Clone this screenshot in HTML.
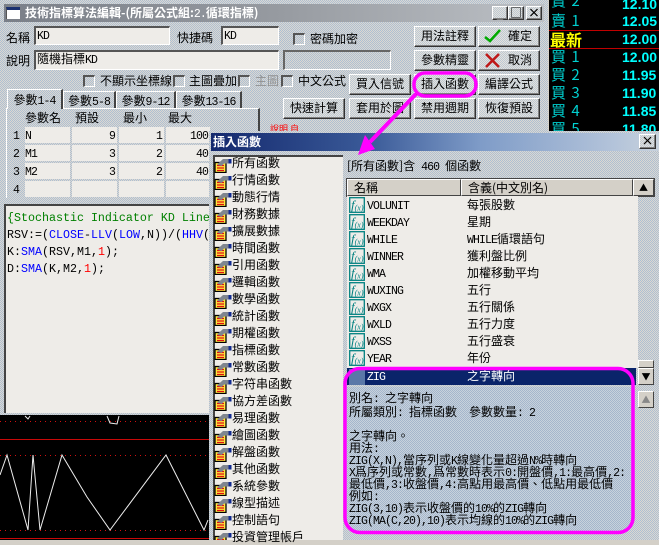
<!DOCTYPE html>
<html><head><meta charset="utf-8">
<style>
html,body{margin:0;padding:0}
body{width:659px;height:540px;overflow:hidden;position:relative;background:#d4d0c8;font:12px/14px "WenQuanYi Zen Hei","Noto Sans CJK TC",sans-serif;color:#000}
div{position:absolute;white-space:nowrap}
i{font:normal 11.5px "Liberation Mono",monospace;letter-spacing:-.9px}
.d{background:repeating-conic-gradient(#dbd8d2 0 25%,#aebfd2 0 50%) 0 0/2px 2px}
.btn{background:repeating-conic-gradient(#e4e2dc 0 25%,#bcc8d4 0 50%) 0 0/2px 2px;border:1px solid;border-color:#fff #333 #333 #fff;box-shadow:inset -1px -1px 0 #808080;text-align:center;line-height:18px;box-sizing:border-box;height:21px}
.in{background:#eeece8;border-top:2px solid #555;border-left:2px solid #555;border-right:1px solid #fff;border-bottom:1px solid #fff;box-sizing:border-box;padding-left:1px;line-height:13px}
.cb{width:12px;height:12px;box-sizing:border-box;border-top:2px solid #555;border-left:2px solid #555;border-right:1px solid #fff;border-bottom:1px solid #fff}
.tab{top:91px;height:17px;border-top:1px solid #fff;border-left:1px solid #fff;border-right:2px solid #444;text-align:center;line-height:17px;box-sizing:border-box}
.cell{background:#eeece8;height:16px;text-align:right;padding-right:2px;box-sizing:border-box;line-height:16px}
.r{left:551px;color:#00d0d0;font-size:15px;line-height:18px;word-spacing:2px}
.v{left:622px;color:#00ffff;font:bold 14px/18px "Liberation Sans",sans-serif}
.code{left:7px;font:11.67px/17px "Liberation Mono",monospace;color:#000}
.hb{background:#d4d0c8;border:1px solid;border-color:#fff #444 #444 #fff;box-sizing:border-box;height:17px;top:179px;line-height:15px;padding-left:6px}
.sb{width:16px;height:17px;background:#d4d0c8;border:1px solid;border-color:#fff #444 #444 #fff;box-sizing:border-box}
.t{left:232px}
.n{left:367px}
.m{left:467px}
.txt{left:349px;line-height:12px}
</style></head>
<body>
<svg width="0" height="0" style="position:absolute">
<symbol id="bk" viewBox="0 0 18 15"><rect x="1" y="4.500" width="11" height="10" fill="#ffe840" stroke="#000" stroke-width="1.300"/><path d="M3 7.500h7M3 10h7M3 12.500h7" stroke="#e01010" stroke-width="1.200"/><path d="M3 6.500 9 1h6v4.500h-5l-2.500 2.500z" fill="#7f868f"/><rect x="14.500" y="1" width="3" height="4.500" fill="#102a90"/></symbol>
<symbol id="fx" viewBox="0 0 16 16"><rect x=".7" y=".7" width="14.600" height="14.600" fill="#eeece8" stroke="#008080" stroke-width="1.300"/><text x="2" y="12.500" font-family="Liberation Serif" font-style="italic" font-size="13" fill="#008080">f<tspan font-size="8" dy="1">(x)</tspan></text></symbol>
</svg>

<!-- main window -->
<div class="d" style="left:0;top:0;width:548px;height:540px"></div>
<div style="left:4px;top:4px;width:540px;height:18px;background:linear-gradient(90deg,#7a7f88,#969aa0 50%,#bcc0c5);color:#fff;font-weight:bold;line-height:18px;padding-left:21px;box-sizing:border-box">技術指標算法編輯-(所屬公式組:<i>2.</i>循環指標)</div>
<div style="left:6px;top:7px;width:14px;height:12px;background:#fff;border-top:3px solid #1a3070;box-sizing:border-box;border-left:1px solid #555"></div>
<div class="btn" style="left:492px;top:6px;width:16px;height:14px;line-height:13px;color:#888">_</div>
<div class="btn" style="left:508px;top:6px;width:16px;height:14px;line-height:11px;font-weight:bold">□</div>
<div class="btn" style="left:526px;top:6px;width:16px;height:14px;line-height:12px;font-weight:bold">×</div>

<div style="left:6px;top:31px">名稱</div>
<div class="in" style="left:34px;top:26px;width:136px;height:19px"><i>KD</i></div>
<div style="left:177px;top:31px">快捷碼</div>
<div class="in" style="left:221px;top:26px;width:58px;height:19px"><i>KD</i></div>
<div class="cb" style="left:293px;top:33px"></div>
<div style="left:310px;top:32px">密碼加密</div>
<div style="left:6px;top:54px">說明</div>
<div class="in" style="left:34px;top:50px;width:245px;height:20px">隨機指標<i>KD</i></div>
<div style="left:283px;top:50px;width:108px;height:20px;box-sizing:border-box;border-top:2px solid #666;border-left:2px solid #666;border-right:1px solid #fff;border-bottom:1px solid #fff"></div>

<div class="cb" style="left:83px;top:75px"></div><div style="left:100px;top:74px">不顯示坐標線</div>
<div class="cb" style="left:173px;top:75px"></div><div style="left:189px;top:74px">主圖疊加</div>
<div class="cb" style="left:238px;top:75px"></div><div style="left:255px;top:74px;color:#909090">主圖</div>
<div class="cb" style="left:281px;top:75px"></div><div style="left:298px;top:74px">中文公式</div>

<div class="btn" style="left:414px;top:26px;width:62px">用法註釋</div>
<div class="btn" style="left:478px;top:26px;width:62px;padding-left:22px">確定</div>
<div class="btn" style="left:414px;top:50px;width:62px">參數精靈</div>
<div class="btn" style="left:478px;top:50px;width:62px;padding-left:22px">取消</div>
<svg style="position:absolute;left:484px;top:29px" width="18" height="14"><path d="M1 8l5 4L16 1" fill="none" stroke="#0a0" stroke-width="2.500"/></svg>
<svg style="position:absolute;left:484px;top:53px" width="18" height="15"><path d="M2 1l13 13M15 1 2 14" stroke="#c01818" stroke-width="2.500"/></svg>
<div class="btn" style="left:349px;top:74px;width:62px">買入信號</div>
<div class="btn" style="left:414px;top:74px;width:62px">插入函數</div>
<div class="btn" style="left:478px;top:74px;width:62px">編譯公式</div>
<div class="btn" style="left:283px;top:98px;width:62px">快速計算</div>
<div class="btn" style="left:349px;top:98px;width:62px">套用於圖</div>
<div class="btn" style="left:414px;top:98px;width:62px">禁用週期</div>
<div class="btn" style="left:478px;top:98px;width:62px">恢復預設</div>
<div style="left:270px;top:124px;color:#f00;font-size:9px;line-height:9px">說明 自 .</div>

<!-- tabs -->
<div style="left:6px;top:108px;width:254px;height:90px;border-left:1px solid #fff;border-top:1px solid #fff;border-right:2px solid #444;box-sizing:border-box"></div>
<div class="tab" style="left:7px;top:89px;width:56px;height:20px;line-height:19px;background:repeating-conic-gradient(#dbd8d2 0 25%,#aebfd2 0 50%) 0 0/2px 2px">參數<i>1-4</i></div>
<div class="tab" style="left:63px;width:53px">參數<i>5-8</i></div>
<div class="tab" style="left:116px;width:60px">參數<i>9-12</i></div>
<div class="tab" style="left:176px;width:66px">參數<i>13-16</i></div>
<div style="left:25px;top:111px">參數名</div><div style="left:75px;top:111px">預設</div><div style="left:123px;top:111px">最小</div><div style="left:168px;top:111px">最大</div>

<div style="left:13px;top:128px"><i>1</i></div><div style="left:13px;top:146px"><i>2</i></div><div style="left:13px;top:164px"><i>3</i></div><div style="left:13px;top:182px"><i>4</i></div>
<div class="cell" style="left:25px;top:127px;width:45px;text-align:left"><i>N</i></div><div class="cell" style="left:72px;top:127px;width:45px"><i>9</i></div><div class="cell" style="left:119px;top:127px;width:45px"><i>1</i></div><div class="cell" style="left:166px;top:127px;width:44px"><i>100</i></div>
<div class="cell" style="left:25px;top:145px;width:45px;text-align:left"><i>M1</i></div><div class="cell" style="left:72px;top:145px;width:45px"><i>3</i></div><div class="cell" style="left:119px;top:145px;width:45px"><i>2</i></div><div class="cell" style="left:166px;top:145px;width:44px"><i>40</i></div>
<div class="cell" style="left:25px;top:163px;width:45px;text-align:left"><i>M2</i></div><div class="cell" style="left:72px;top:163px;width:45px"><i>3</i></div><div class="cell" style="left:119px;top:163px;width:45px"><i>2</i></div><div class="cell" style="left:166px;top:163px;width:44px"><i>40</i></div>
<div class="cell" style="left:25px;top:181px;width:45px"></div><div class="cell" style="left:72px;top:181px;width:45px"></div><div class="cell" style="left:119px;top:181px;width:45px"></div><div class="cell" style="left:166px;top:181px;width:44px"></div>

<!-- editor -->
<div style="left:4px;top:204px;width:206px;height:209px;background:#eeece8;border-top:2px solid #444;border-left:2px solid #444;box-sizing:border-box"></div>
<div class="code" style="top:210px;color:#008000">{Stochastic Indicator KD Line</div>
<div class="code" style="top:227px">RSV:=(<span style="color:#00f">CLOSE</span>-<span style="color:#00f">LLV</span>(<span style="color:#00f">LOW</span>,N))/(<span style="color:#00f">HHV</span>(</div>
<div class="code" style="top:244px">K:<span style="color:#00f">SMA</span>(RSV,M1,<span style="color:#f00">1</span>);</div>
<div class="code" style="top:261px">D:<span style="color:#00f">SMA</span>(K,M2,<span style="color:#f00">1</span>);</div>

<!-- chart -->
<svg style="position:absolute;left:0;top:415px" width="209" height="125">
<rect width="209" height="125" fill="#000"/>
<path d="M0 6.500H209M0 40.500H209M0 115.500H209" stroke="#d01010" stroke-dasharray="1 4"/>
<path d="M0 24.500H209M0 123.500H209" stroke="#c80808"/>
<path d="M0 60 7 40 28 115 33 40 40 115 62 40 87 82 110 115 166 40 204 115 208 105M25 1 28 4 30 1M107 1 110 8 117 9 119 1" fill="none" stroke="#eee"/>
</svg>

<!-- right quote panel -->
<div style="left:549px;top:0;width:110px;height:132px;background:#000"></div>
<div class="r" style="top:-8px">賣 2</div><div class="v" style="top:-5px">12.10</div>
<div class="r" style="top:12px">賣 1</div><div class="v" style="top:12px">12.05</div>
<div style="left:549px;top:30px;width:110px;height:1px;background:#c00000"></div>
<div style="left:550px;top:30px;color:#ffff00;font-weight:bold;font-size:16px;line-height:18px">最新</div><div class="v" style="top:30px">12.00</div>
<div style="left:549px;top:48px;width:110px;height:1px;background:#c00000"></div>
<div class="r" style="top:48px">買 1</div><div class="v" style="top:48px">12.00</div>
<div class="r" style="top:66px">買 2</div><div class="v" style="top:66px">11.95</div>
<div class="r" style="top:84px">買 3</div><div class="v" style="top:84px">11.90</div>
<div class="r" style="top:102px">買 4</div><div class="v" style="top:102px">11.85</div>
<div class="r" style="top:120px">買 5</div><div class="v" style="top:120px">11.80</div>

<!-- dialog -->
<div class="d" style="left:209px;top:131px;width:450px;height:409px"></div>
<div style="left:211px;top:133px;width:448px;height:18px;background:linear-gradient(90deg,#14296e,#3a5a98 35%,#7f9cc8 60%,#b4c4da 90%,#c8d2dc);color:#fff;font-weight:bold;line-height:18px;padding-left:2px">插入函數</div>
<div class="btn" style="left:639px;top:134px;width:17px;height:15px;line-height:12px;font-weight:bold">×</div>
<div style="left:213px;top:155px;width:130px;height:385px;background:#eeece8;border-top:2px solid #444;border-left:2px solid #444;box-sizing:border-box"></div>

<div class="t" style="top:156px">所有函數</div><div class="t" style="top:173px">行情函數</div><div class="t" style="top:190px">動態行情</div><div class="t" style="top:207px">財務數據</div><div class="t" style="top:224px">擴展數據</div><div class="t" style="top:241px">時間函數</div><div class="t" style="top:258px">引用函數</div><div class="t" style="top:275px">邏輯函數</div><div class="t" style="top:292px">數學函數</div><div class="t" style="top:309px">統計函數</div><div class="t" style="top:326px">期權函數</div><div class="t" style="top:343px">指標函數</div><div class="t" style="top:360px">常數函數</div><div class="t" style="top:377px">字符串函數</div><div class="t" style="top:394px">協方差函數</div><div class="t" style="top:411px">易理函數</div><div class="t" style="top:428px">繪圖函數</div><div class="t" style="top:445px">解盤函數</div><div class="t" style="top:462px">其他函數</div><div class="t" style="top:479px">系統參數</div><div class="t" style="top:496px">線型描述</div><div class="t" style="top:513px">控制語句</div><div class="t" style="top:530px">投資管理帳戶</div>

<svg style="position:absolute;left:214px;top:158px" width="19" height="382">
<use href="#bk" width="18" height="15" y="0"/><use href="#bk" width="18" height="15" y="17"/><use href="#bk" width="18" height="15" y="34"/><use href="#bk" width="18" height="15" y="51"/><use href="#bk" width="18" height="15" y="68"/><use href="#bk" width="18" height="15" y="85"/><use href="#bk" width="18" height="15" y="102"/><use href="#bk" width="18" height="15" y="119"/><use href="#bk" width="18" height="15" y="136"/><use href="#bk" width="18" height="15" y="153"/><use href="#bk" width="18" height="15" y="170"/><use href="#bk" width="18" height="15" y="187"/><use href="#bk" width="18" height="15" y="204"/><use href="#bk" width="18" height="15" y="221"/><use href="#bk" width="18" height="15" y="238"/><use href="#bk" width="18" height="15" y="255"/><use href="#bk" width="18" height="15" y="272"/><use href="#bk" width="18" height="15" y="289"/><use href="#bk" width="18" height="15" y="306"/><use href="#bk" width="18" height="15" y="323"/><use href="#bk" width="18" height="15" y="340"/><use href="#bk" width="18" height="15" y="357"/><use href="#bk" width="18" height="15" y="374"/>
</svg>

<div style="left:347px;top:159px">[所有函數]含<i> 460 </i>個函數</div>
<div style="left:346px;top:178px;width:309px;height:19px;background:#444"></div>
<div class="hb" style="left:347px;width:114px">名稱</div>
<div class="hb" style="left:461px;width:172px">含義(中文別名)</div>
<div class="hb" style="left:633px;width:21px;padding:0;text-align:center;font-size:9px">▲</div>
<div style="left:347px;top:196px;width:291px;height:172px;background:#eeece8"></div>

<svg style="position:absolute;left:349px;top:197px" width="17" height="187">
<use href="#fx" width="16" height="16" y="0"/><use href="#fx" width="16" height="16" y="17"/><use href="#fx" width="16" height="16" y="34"/><use href="#fx" width="16" height="16" y="51"/><use href="#fx" width="16" height="16" y="68"/><use href="#fx" width="16" height="16" y="85"/><use href="#fx" width="16" height="16" y="102"/><use href="#fx" width="16" height="16" y="119"/><use href="#fx" width="16" height="16" y="136"/><use href="#fx" width="16" height="16" y="153"/>
</svg>
<div class="n" style="top:198px"><i>VOLUNIT</i></div><div class="m" style="top:198px">每張股數</div>
<div class="n" style="top:215px"><i>WEEKDAY</i></div><div class="m" style="top:215px">星期</div>
<div class="n" style="top:232px"><i>WHILE</i></div><div class="m" style="top:232px"><i>WHILE</i>循環語句</div>
<div class="n" style="top:249px"><i>WINNER</i></div><div class="m" style="top:249px">獲利盤比例</div>
<div class="n" style="top:266px"><i>WMA</i></div><div class="m" style="top:266px">加權移動平均</div>
<div class="n" style="top:283px"><i>WUXING</i></div><div class="m" style="top:283px">五行</div>
<div class="n" style="top:300px"><i>WXGX</i></div><div class="m" style="top:300px">五行關係</div>
<div class="n" style="top:317px"><i>WXLD</i></div><div class="m" style="top:317px">五行力度</div>
<div class="n" style="top:334px"><i>WXSS</i></div><div class="m" style="top:334px">五行盛衰</div>
<div class="n" style="top:351px"><i>YEAR</i></div><div class="m" style="top:351px">年份</div>

<div style="left:347px;top:368px;width:289px;height:17px;background:#0a246a"></div>
<div style="left:349px;top:369px;width:16px;height:16px;background:#5a78a8"></div>
<div class="n" style="top:369px;color:#fff"><i>ZIG</i></div><div class="m" style="top:369px;color:#fff">之字轉向</div>
<div class="sb" style="left:638px;top:360px;height:8px"></div>
<div class="sb" style="left:638px;top:368px;font-size:9px;line-height:15px;text-align:center">▼</div>
<div class="sb" style="left:638px;top:391px;height:17px;font-size:9px;line-height:15px;text-align:center;color:#888">▲</div>

<!-- description -->
<div style="left:347px;top:387px;width:286px;height:146px;background:repeating-conic-gradient(#c8d2dc 0 25%,#a4b6cc 0 50%) 0 0/2px 2px;border-radius:0 0 14px 14px"></div>
<div class="txt" style="top:392px">別名<i>: </i>之字轉向</div>
<div class="txt" style="top:406px">所屬類別<i>: </i>指標函數　參數數量<i>: 2</i></div>
<div class="txt" style="top:430px">之字轉向。</div>
<div class="txt" style="top:442px">用法<i>:</i></div>
<div class="txt" style="top:454px"><i>ZIG(X,N),</i>當序列或<i>K</i>線變化量超過<i>N%</i>時轉向</div>
<div class="txt" style="top:466px"><i>X</i>爲序列或常數<i>,</i>爲常數時表示<i>0:</i>開盤價<i>,1:</i>最高價<i>,2:</i></div>
<div class="txt" style="top:478px">最低價<i>,3:</i>收盤價<i>,4:</i>高點用最高價、低點用最低價</div>
<div class="txt" style="top:490px">例如<i>:</i></div>
<div class="txt" style="top:502px"><i>ZIG(3,10)</i>表示收盤價的<i>10%</i>的<i>ZIG</i>轉向</div>
<div class="txt" style="top:514px"><i>ZIG(MA(C,20),10)</i>表示均線的<i>10%</i>的<i>ZIG</i>轉向</div>

<!-- annotations -->
<svg style="position:absolute;left:0;top:0" width="659" height="540">
<rect x="345" y="368.500" width="288" height="164" rx="15" fill="none" stroke="#ff00ff" stroke-width="3.500"/>
<rect x="414" y="73" width="62" height="23" rx="11" fill="none" stroke="#ff00ff" stroke-width="3.500"/>
<path d="M416 94 370 142" stroke="#ff00ff" stroke-width="4"/>
<path d="M358 155 375 149 365 135z" fill="#ff00ff"/>
</svg>
</body></html>
